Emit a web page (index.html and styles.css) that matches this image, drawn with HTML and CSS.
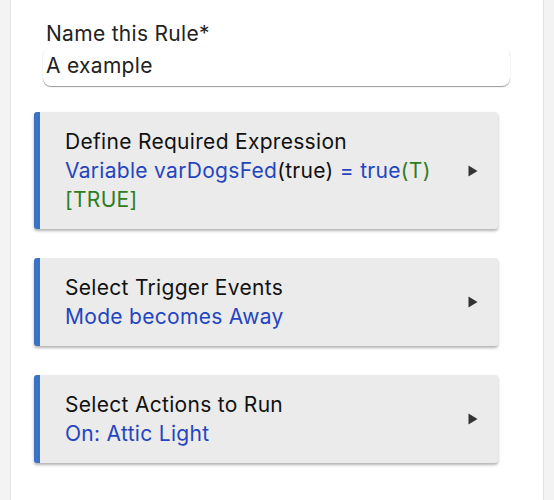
FILE: index.html
```html
<!DOCTYPE html>
<html>
<head>
<meta charset="utf-8">
<link rel="stylesheet" href="styles.css">
</head>
<body>
<div class="panel">
  <div class="field">
    <div class="label">Name this Rule*</div>
    <div class="input">A example</div>
  </div>
  <div class="cards">
    <div class="card">
      <div class="card-text">
        <div class="title">Define Required Expression</div>
        <div class="line"><span class="blue">Variable varDogsFed</span>(true) <span class="blue">= true</span><span class="green">(T)</span></div>
        <div class="line green">[TRUE]</div>
      </div>
      <svg class="arrow" width="10" height="12" viewBox="0 0 10 12"><path d="M0.5 0.5 L9.5 6 L0.5 11.5 Z" fill="#333"/></svg>
    </div>
    <div class="card">
      <div class="card-text">
        <div class="title">Select Trigger Events</div>
        <div class="line blue">Mode becomes Away</div>
      </div>
      <svg class="arrow" width="10" height="12" viewBox="0 0 10 12"><path d="M0.5 0.5 L9.5 6 L0.5 11.5 Z" fill="#333"/></svg>
    </div>
    <div class="card">
      <div class="card-text">
        <div class="title">Select Actions to Run</div>
        <div class="line blue">On: Attic Light</div>
      </div>
      <svg class="arrow" width="10" height="12" viewBox="0 0 10 12"><path d="M0.5 0.5 L9.5 6 L0.5 11.5 Z" fill="#333"/></svg>
    </div>
  </div>
</div>
</body>
</html>
```
FILE: styles.css
```css
html, body {
  margin: 0;
  padding: 0;
  background: #f3f3f3;
  height: 100%;
}
body {
  font-family: Inter, Roboto, "Liberation Sans", sans-serif;
  overflow: hidden;
  letter-spacing: 0.3px;
}
.panel {
  margin-left: 10px;
  width: 532px;
  min-height: 500px;
  background: #fff;
  border-left: 1px solid #e2e2e2;
  border-right: 1px solid #e2e2e2;
  padding: 19px 0 0 0;
  box-sizing: content-box;
}
.field {
  margin-left: 32px;
  width: 467px;
}
.label {
  font-size: 21px;
  line-height: 29px;
  color: #222;
  padding-left: 3px;
}
.input {
  height: 38px;
  line-height: 36px;
  font-size: 21px;
  color: #222;
  padding-left: 3px;
  border-radius: 8px;
  box-shadow: 0 1px 1px rgba(0,0,0,0.4), 0 0 1px rgba(0,0,0,0.06);
  box-sizing: border-box;
}
.cards {
  display: flex;
  flex-direction: column;
  gap: 29px;
  margin-top: 26px;
  margin-left: 23px;
  width: 464px;
}
.card {
  display: flex;
  align-items: center;
  background: #ebebeb;
  border-left: 6px solid #3a72c4;
  border-radius: 3px;
  box-shadow: 0 2px 3px rgba(0,0,0,0.3);
  padding: 15px 20px 15px 25px;
}
.card-text {
  flex: 1;
  font-size: 21px;
  line-height: 29px;
}
.title {
  color: #111;
}
.line {
  color: #111;
}
.blue {
  color: #2445bf;
}
.green {
  color: #2e7d1e;
}
.arrow {
  display: block;
  flex: none;
}
```
